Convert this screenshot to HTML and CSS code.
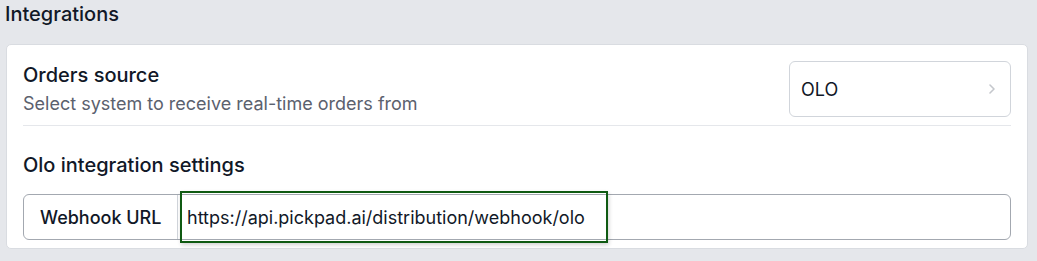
FILE: index.html
```html
<!DOCTYPE html>
<html>

<head>
    <title>Integrations</title>
    <link rel="stylesheet" href="styles.css">
</head>

<body>
    <h2 class="page-title">Integrations</h2>

    <div class="card">
        <div class="setting-row">
            <div class="setting-text">
                <div class="setting-name">Orders source</div>
                <div class="setting-desc">Select system to receive real-time orders from</div>
            </div>
            <button class="select-box" type="button">
                <span>OLO</span>
                <svg class="chevron" width="8" height="12" viewBox="0 0 8 12">
                    <path d="M2 2l4 4-4 4" fill="none" stroke="#c4c7cc" stroke-width="1.6" stroke-linecap="round" stroke-linejoin="round"/>
                </svg>
            </button>
        </div>

        <div class="divider"></div>

        <div class="section-title">Olo integration settings</div>

        <div class="input-group">
            <label class="input-label" for="webhook_url">Webhook URL</label>
            <div class="input-field">
                <input type="text" id="webhook_url" value="https://api.pickpad.ai/distribution/webhook/olo" readonly>
                <span class="highlight"></span>
            </div>
        </div>
    </div>
</body>

</html>
```

FILE: styles.css
```css
* {
    box-sizing: border-box;
}

body {
    margin: 0;
    padding: 0 9px 0 6px;
    background: #e5e7eb;
    font-family: Inter, "Noto Sans", sans-serif;
    color: #111827;
}

.page-title {
    margin: 0 0 16px -1px;
    font-size: 20px;
    font-weight: 500;
    line-height: 28px;
}

.card {
    background: white;
    border: 1px solid #d9dce1;
    border-radius: 5px;
    padding: 15px 16px 8px;
}

.setting-row {
    display: flex;
    justify-content: space-between;
    align-items: center;
}

.setting-name {
    font-size: 20px;
    font-weight: 500;
    line-height: 30px;
}

.setting-desc {
    font-size: 18px;
    color: #5b616e;
    line-height: 28px;
}

.select-box {
    width: 222px;
    height: 56px;
    display: flex;
    justify-content: space-between;
    align-items: center;
    padding: 0 14px 0 11px;
    background: white;
    border: 1px solid #d1d5db;
    border-radius: 6px;
    font-family: inherit;
    font-size: 18px;
    color: #111827;
    cursor: pointer;
}

.divider {
    height: 1px;
    background: #e5e7eb;
    margin: 7px 0 0;
}

.section-title {
    font-size: 20px;
    font-weight: 500;
    line-height: 28px;
    margin: 25px 0 15px;
}

.input-group {
    display: flex;
    height: 46px;
    border: 1px solid #a3a8b0;
    border-radius: 6px;
}

.input-label {
    flex-shrink: 0;
    width: 154px;
    padding-left: 16px;
    display: flex;
    align-items: center;
    font-size: 18px;
    font-weight: 500;
    border-right: 1px solid #d1d5db;
}

.input-field {
    position: relative;
    flex: 1;
    display: flex;
    min-width: 0;
}

.input-field input {
    flex: 1;
    min-width: 0;
    border: none;
    outline: none;
    background: transparent;
    padding: 0 9px;
    font-family: inherit;
    font-size: 18px;
    color: #111827;
}

.highlight {
    position: absolute;
    left: 2px;
    top: -4px;
    width: 428px;
    height: 52px;
    border: 2px solid #0f5a12;
    box-shadow: 1px 2px 4px rgba(0, 0, 0, 0.18);
    pointer-events: none;
}
```
